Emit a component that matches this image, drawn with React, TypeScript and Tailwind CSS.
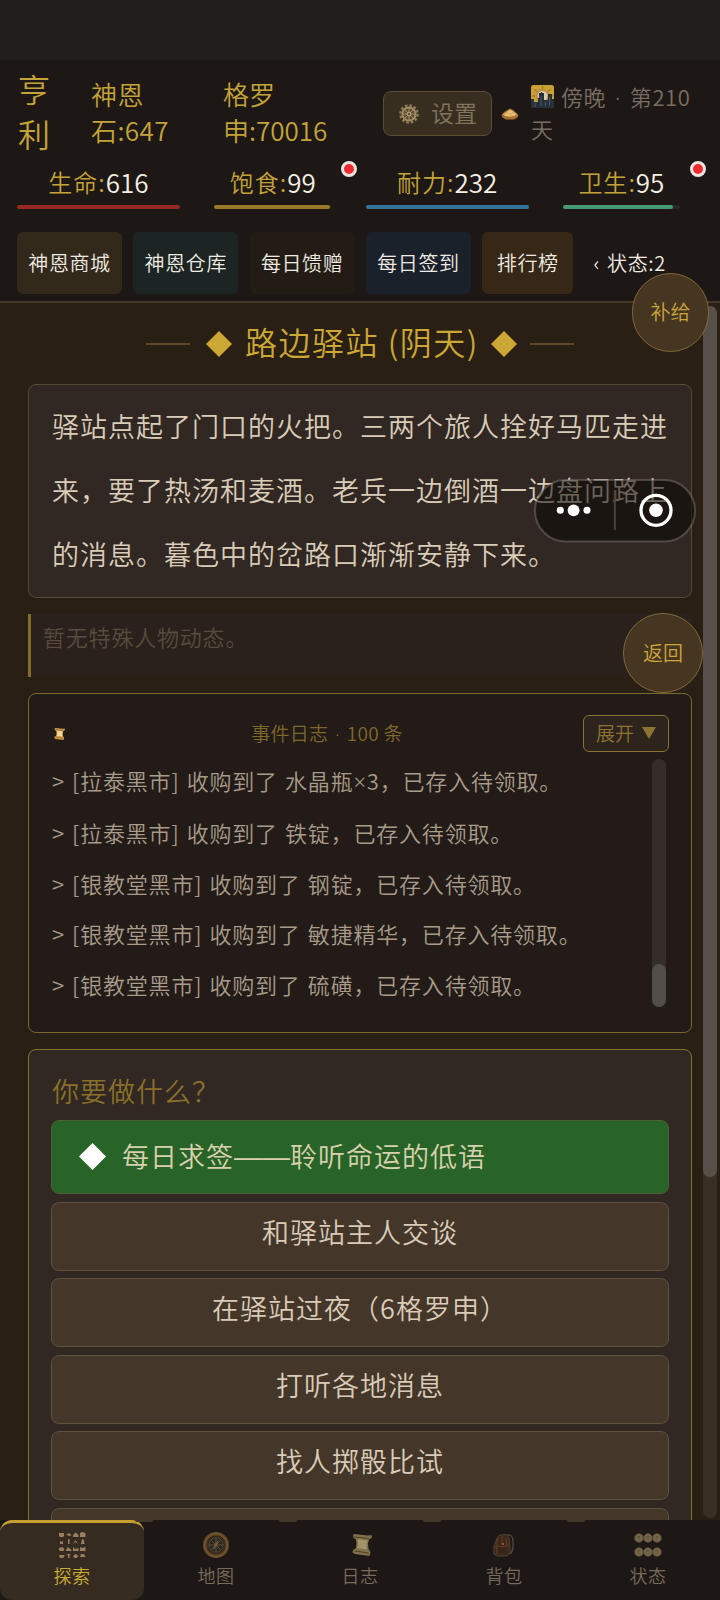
import { clsx } from "clsx";

const stats = [
    { label: "生命", value: 616, width: "w-[163px]", bar: "bg-[#962925]", fill: 100, alert: false },
    { label: "饱食", value: 99, width: "w-[117px]", bar: "bg-[#997929]", fill: 99, alert: true },
    { label: "耐力", value: 232, width: "w-[163px]", bar: "bg-[#36739a]", fill: 100, alert: false },
    { label: "卫生", value: 95, width: "w-[117px]", bar: "bg-[#459a74]", fill: 94, alert: true },
];

const shortcuts = [
    { label: "神恩商城", className: "w-[105px] bg-[#33291b]" },
    { label: "神恩仓库", className: "w-[105px] bg-[#1c2523]" },
    { label: "每日馈赠", className: "w-[105px] bg-[#221c14]" },
    { label: "每日签到", className: "w-[105px] bg-[#1b212b]" },
    { label: "排行榜", className: "w-[91px] bg-[#372717]" },
];

const logs = [
    "[拉泰黑市] 收购到了 水晶瓶×3，已存入待领取。",
    "[拉泰黑市] 收购到了 铁锭，已存入待领取。",
    "[银教堂黑市] 收购到了 钢锭，已存入待领取。",
    "[银教堂黑市] 收购到了 敏捷精华，已存入待领取。",
    "[银教堂黑市] 收购到了 硫磺，已存入待领取。",
];

const choices = ["和驿站主人交谈", "在驿站过夜（6格罗申）", "打听各地消息", "找人掷骰比试", ""];

function GearIcon() {
    return (
        <svg width="20" height="20" viewBox="0 0 20 20" fill="none">
            <circle cx="10" cy="10" r="8.6" stroke="#8d7a55" strokeWidth="2.4" strokeDasharray="2.7 1.8" />
            <circle cx="10" cy="10" r="6.6" fill="#5d4c30" stroke="#a08c64" strokeWidth="2" />
            <path d="M10 4v12M4 10h12M5.8 5.8l8.4 8.4M14.2 5.8l-8.4 8.4" stroke="#a08c64" strokeWidth="1" />
            <circle cx="10" cy="10" r="2.4" fill="#b09a6c" />
            <circle cx="10" cy="10" r="1" fill="#3d321e" />
        </svg>
    );
}

function GoldPileIcon() {
    return (
        <svg width="18" height="12" viewBox="0 0 18 12">
            <path d="M.500 7L3 4l3.500-2L9 .500l3 1.500 3 2.500L17.500 7l-1 2.500L13 11.500H5L1.500 9.500z" fill="#a87032" />
            <path d="M2 6.500L6.500 3 9 1.500l3 1.500 4 3.500L14 8l-5 1-5-1z" fill="#dbad60" />
            <path d="M4.500 7h4M7 4h4M10.500 6.500h3" stroke="#f3d796" strokeWidth="1" />
        </svg>
    );
}

function DuskIcon() {
    return (
        <svg className="inline-block align-[-2px] mr-[7px]" width="23" height="23" viewBox="0 0 23 23">
            <rect width="23" height="23" rx="2.500" fill="#c8a035" />
            <path d="M11.500 1v3M3.500 4.500l2.500 2M19.500 4.500l-2.500 2M1 11h3M19 11h3" stroke="#a97622" strokeWidth="1.300" />
            <circle cx="11.500" cy="11" r="6.800" fill="#b98a45" />
            <circle cx="11.500" cy="11" r="5" fill="#d8ccac" />
            <path d="M0 14h3v3h4v-4h1V8h2V7h1v1h2v7h4V9h4v5h2v9H0z" fill="#26313c" />
            <path d="M4 18v4M10 11v10M14.500 17v4M18.500 12v8" stroke="#4b5861" strokeWidth="1" />
        </svg>
    );
}

function ScrollIcon({ className, bright }: { className: string; bright?: boolean }) {
    return (
        <svg className={className} viewBox="0 0 20 22">
            <path d="M1 1.500L2 0l14 1.500L19.500 1l.500 2.500-3 2-1 4 .500 5.500 2 3-1 4L3 20l-2.500-1.500L1 16l3-2 .500-5L4 5.500 1.500 4z" fill={bright ? "#cf9f4e" : "#80704a"} />
            <path d="M5.500 5l10 1.500-1 4 .500 5-10-1.500 1-4z" fill={bright ? "#f0d79a" : "#a3936c"} />
            <path d="M2 3l15 1.500M2.500 17l14 2" stroke={bright ? "#8d5c24" : "#51412a"} strokeWidth="1.200" />
        </svg>
    );
}

function ExploreIcon() {
    const shapes = [
        "M0 1h5v3l-1 1H1L0 4z", "M0 3l3-2 2.500 2L4 4z", "M0 5V3l2.500-2.500L5.500 3v2z", "M0 1l2-1 3.500 1v4H0z",
        "M1 5V2l2 1 1-2v4z", "M2 0h1.500v5H2z", "M0 5l2.500-4L5 5l-2.500-2z", "M2 0l2 1 .500 4H1z",
        "M0 2l3-1 2.500 2-1 2H1L0 4z", "M0 5V4l2-3 3.500 3v1z", "M0 1l2 2 3.500-1v3H0z", "M0 1l2 1 3.500-1v4H0z",
        "M0 2h5.500v1L4 5H1z", "M0 1h5L3.500 2v3H2V2z", "M0 3l2.500-2 3 2-2 2h-2z", "M1 1h3l1.500 3H0z",
    ];
    return (
        <svg width="28" height="28" viewBox="0 0 28 28" fill="#9a7e60">
            {shapes.map((d, i) => (
                <path key={i} d={d} transform={`translate(${1 + (i % 4) * 7} ${1 + Math.floor(i / 4) * 7})`} />
            ))}
        </svg>
    );
}

function CompassIcon() {
    return (
        <svg width="28" height="28" viewBox="0 0 28 28" fill="none">
            <circle cx="14" cy="14" r="13" fill="#66492a" />
            <circle cx="14" cy="14" r="11.500" stroke="#7a5b36" strokeWidth=".8" />
            <circle cx="14" cy="14" r="9" fill="#292620" stroke="#3c2b19" strokeWidth="1.500" />
            <circle cx="14" cy="14" r="7.200" stroke="#51452f" />
            <path d="M14 7v14M7 14h14M9.500 9.500l9 9M18.500 9.500l-9 9" stroke="#665840" strokeWidth=".9" />
            <path d="M17 8.500l-2.200 6L11 19l1.500-5.500z" fill="#6e5f43" />
        </svg>
    );
}

function BackpackIcon() {
    return (
        <svg width="28" height="28" viewBox="0 0 28 28" fill="none">
            <path d="M17 4c5-1 6 3 6 8s0 9-3 11" stroke="#51483e" strokeWidth="1.300" />
            <path d="M7 7l3-3 6-.500 3 3.500 1 8v7l-3 3H7l-3-2v-8z" fill="#3d2719" stroke="#4d443c" strokeWidth="1" />
            <path d="M8 7c-2 6-1 10-1 16M12 5v8M16 7l1 8M5 16l14-1" stroke="#5d3c25" strokeWidth="1.200" />
            <path d="M8 17h8v5H8z" fill="#38251a" />
            <circle cx="13" cy="13" r="1.100" fill="#927049" />
        </svg>
    );
}

function StatusIcon() {
    return (
        <svg width="28" height="28" viewBox="0 0 28 28">
            {[7, 21].map((cy) =>
                [5, 14, 23].map((cx) => (
                    <g key={`${cx}-${cy}`}>
                        <circle cx={cx} cy={cy} r="4.300" fill="#74664a" stroke="#5e5138" strokeWidth=".8" />
                        <path d={`M${cx} ${cy - 2}v3.500M${cx - 1.5} ${cy - 1}h2.500`} stroke="#5b4e34" strokeWidth=".9" />
                    </g>
                ))
            )}
        </svg>
    );
}

const tabs = [
    { label: "探索", icon: <ExploreIcon /> },
    { label: "地图", icon: <CompassIcon /> },
    { label: "日志", icon: <ScrollIcon className="w-5 h-[22px] ml-1" /> },
    { label: "背包", icon: <BackpackIcon /> },
    { label: "状态", icon: <StatusIcon /> },
];

function Diamond({ className }: { className: string }) {
    return (
        <svg className={className} viewBox="0 0 26 26" fill="currentColor">
            <path d="M13 0l13 13-13 13L0 13z" />
        </svg>
    );
}

function Latin({ children, className }: { children: string; className?: string }) {
    return <span className={clsx("font-['Noto_Sans',sans-serif]", className)}>{children}</span>;
}

function Header() {
    return (
        <header className="h-[243px] shrink-0 bg-[#1d1815] border-b-2 border-[#463826]">
            {/* Character and currencies */}
            <div className="h-[104px] pl-[18px] flex items-center text-[#c4a339]">
                <div className="w-[34px] -mt-[2px] text-[32px] leading-[45px]">亨利</div>
                <div className="ml-[39px] w-[90px] -mt-px text-[26px] leading-[36px] tracking-[0.4px] whitespace-pre">{"神恩\n石:647"}</div>
                <div className="ml-[42px] w-[120px] -mt-px text-[26px] leading-[36px] whitespace-pre">{"格罗\n申:70016"}</div>
                <button className="ml-[40px] mt-[3px] w-[109px] h-[45px] shrink-0 rounded-lg border border-[#5b4d35] bg-[#382e20] flex items-center pl-[15px] gap-3 text-[23px] text-[#82755f]">
                    <GearIcon />
                    <span className="whitespace-nowrap -mt-0.5">设置</span>
                </button>
                <div className="ml-[9px] mt-[3px]">
                    <GoldPileIcon />
                </div>
                <div className="ml-3 mt-px text-[22px] leading-[31px] tracking-[0.6px] text-[#796e63] whitespace-nowrap">
                    <DuskIcon />傍晚<Latin className="[word-spacing:2.5px]"> · </Latin>第210<br />天
                </div>
            </div>

            {/* Vital stats */}
            <div className="h-[46px] pl-[17px] flex gap-[34.3px]">
                {stats.map((stat) => (
                    <div key={stat.label} className={clsx("relative shrink-0", stat.width)}>
                        <div className="h-[41px] flex items-center justify-center whitespace-nowrap pb-[6px]">
                            <span className="text-[24px] tracking-[1px] text-[#c4a339]">{stat.label}:</span>
                            <span className="text-[26px] text-[#f6f0e3]">{stat.value}</span>
                        </div>
                        <div className="h-1 rounded-full bg-[#202c25]">
                            <div className={clsx("h-1 rounded-full", stat.bar)} style={{ width: `${stat.fill}%` }} />
                        </div>
                        {stat.alert && (
                            <span className="absolute -right-[26px] -top-[3px] w-4 h-4 rounded-full border-[3px] border-[#ece4e0] bg-[#ee2b30]" />
                        )}
                    </div>
                ))}
            </div>

            {/* Shortcuts */}
            <div className="mt-[22px] pl-[17px] flex gap-[11.3px] items-center text-[20px] tracking-[0.6px] text-[#f0ebe2]">
                {shortcuts.map((item) => (
                    <button key={item.label} className={clsx("h-[62px] rounded-md whitespace-nowrap", item.className)}>
                        {item.label}
                    </button>
                ))}
                <span className="ml-[9px] whitespace-nowrap [word-spacing:2px]">‹ 状态:2</span>
            </div>
        </header>
    );
}

function EventLog() {
    return (
        <section className="mt-4 h-[340px] rounded-lg border border-[#7c672e] bg-[#221b17] pl-[23px] pr-[22px] pt-[21px]">
            <div className="h-[37px] flex items-center text-[19px] text-[#80682b]">
                <ScrollIcon className="w-[11px] h-3 ml-0.5" bright />
                <span className="flex-1 pl-1.5 text-center tracking-[0.300px]">
                    事件日志<Latin className="[word-spacing:1.5px]"> · </Latin>100 条
                </span>
                <button className="w-[86px] h-[37px] rounded-md border border-[#8a7234] bg-[#2d241d] pb-px flex items-center justify-center gap-2 text-[#8d7331]">
                    展开
                    <svg width="14" height="12" viewBox="0 0 14 12" fill="currentColor">
                        <path d="M0 0h14L7 12z" />
                    </svg>
                </button>
            </div>
            <div className="mt-[3px] flex justify-between pr-[3px]">
                <ul className="text-[22px] leading-[50.8px] tracking-[0.800px] [word-spacing:1.5px] text-[#a99c8a] whitespace-nowrap">
                    {logs.map((line) => (
                        <li key={line}>
                            &gt; {line.split("×")[0]}
                            {line.includes("×") && <Latin>×</Latin>}
                            {line.split("×")[1]}
                        </li>
                    ))}
                </ul>
                <div className="mt-[4px] h-[248px] w-[14px] rounded-full bg-[#352d29] flex flex-col justify-end">
                    <div className="h-[43px] rounded-full bg-[#524d48]" />
                </div>
            </div>
        </section>
    );
}

function Choices() {
    return (
        <section className="mt-4 h-[620px] rounded-lg border border-[#85722e] bg-[#312823] px-[22px] pt-5">
            <h2 className="pl-px h-[42px] leading-[42px] text-[27px] tracking-[1px] text-[#8a7029]">你要做什么？</h2>
            <button className="mt-2 w-full h-[74px] rounded-lg border border-[#515e34] bg-[#286428] pb-px flex items-center pl-[27px] text-[27px] tracking-[1px] text-[#d9d1ae]">
                <Diamond className="w-[27px] h-[27px] mr-4 text-white" />
                <span>
                    每日求签
                    <span className="relative -top-px font-['Liberation_Sans',sans-serif] text-[28px] tracking-normal leading-none">——</span>
                    聆听命运的低语
                </span>
            </button>
            <div className="mt-[7.500px] flex flex-col gap-[7.500px]">
                {choices.map((choice, i) => (
                    <button
                        key={i}
                        className="h-[69px] shrink-0 rounded-lg border border-[#5f513c] bg-[#44372a] pb-2 text-[27px] tracking-[1px] text-[#dacbb8]"
                    >
                        {choice}
                    </button>
                ))}
            </div>
        </section>
    );
}

function MiniProgramCapsule() {
    return (
        <svg className="absolute left-[533px] top-[478px]" width="164" height="65" viewBox="0 0 164 65">
            <rect x="2" y="2" width="160" height="61.500" rx="30.700" fill="#080504" fillOpacity=".53" stroke="#8c847e" strokeOpacity=".42" strokeWidth="2" />
            <path d="M81.800 12v40" stroke="#4b4541" strokeWidth="2" />
            <g fill="#fff">
                <circle cx="27.300" cy="32.300" r="3.500" />
                <circle cx="40.600" cy="32.300" r="5.900" />
                <circle cx="54" cy="32.300" r="3.500" />
                <circle cx="123" cy="32.300" r="6.800" />
            </g>
            <circle cx="123" cy="32.300" r="15" fill="none" stroke="#fff" strokeWidth="3.300" />
        </svg>
    );
}

export default function App() {
    return (
        <div
            lang="zh-CN"
            className="relative w-[720px] h-[1600px] overflow-hidden flex flex-col bg-[#2a1f14] font-['Noto_Sans_CJK_SC',sans-serif] font-[350]"
        >
            <div className="h-[60px] shrink-0 bg-[#221e1b]" />
            <Header />

            <div className="flex-1 min-h-0 flex overflow-hidden">
                <main className="w-[664px] ml-[28px] shrink-0">
                    <h1 className="h-[81px] flex items-center justify-center text-[32px] tracking-[1.500px] text-[#cba734] whitespace-nowrap">
                        <span className="w-11 h-0.5 bg-[#5d4928] mr-4" />
                        <Diamond className="w-[26px] h-[26px] mr-[13px]" />
                        <span className="-mt-[5px]">路边驿站 (阴天)</span>
                        <Diamond className="w-[26px] h-[26px] ml-[12px]" />
                        <span className="w-11 h-0.5 bg-[#5d4928] ml-[13px]" />
                    </h1>
                    <p className="h-[214px] rounded-lg border border-[#544937] bg-[#312823] px-[23px] py-[9px] text-[27px] leading-[64px] tracking-[1px] text-[#d9ccb8] whitespace-pre">
                        {"驿站点起了门口的火把。三两个旅人拴好马匹走进\n来，要了热汤和麦酒。老兵一边倒酒一边盘问路上\n的消息。暮色中的岔路口渐渐安静下来。"}
                    </p>
                    <div className="mt-4 h-[63px] border-l-[3px] border-[#856b2b] bg-[#2a211c] pl-3 pt-[3px] text-[22px] leading-[38px] tracking-[0.800px] text-[#574c3d]">
                        暂无特殊人物动态。
                    </div>
                    <EventLog />
                    <Choices />
                </main>
                <div className="ml-[11px] w-[14px] mt-[3px] mb-[2px] rounded-full bg-[#3a2f25]">
                    <div className="h-[871px] rounded-full bg-[#565049]" />
                </div>
            </div>

            <nav className="h-20 shrink-0 flex bg-[#1d1815]">
                {tabs.map((tab, i) => (
                    <button
                        key={tab.label}
                        className={clsx(
                            "relative w-36 pt-2 flex flex-col items-center text-[18px] leading-[34px] tracking-[0.500px]",
                            i === 0
                                ? "rounded-xl border-t-[3px] border-[#c5a031] bg-[#352b20] text-[#cdab35]"
                                : "border-t-[3px] border-transparent text-[#776b5b]"
                        )}
                    >
                        <span className="h-7 flex items-center">{tab.icon}</span>
                        <span className="h-[34px] -mt-px">{tab.label}</span>
                        {i > 0 && <span className="absolute -left-[9px] -top-[3px] w-[18px] h-0.5 rounded-b-full bg-[#44382b]" />}
                    </button>
                ))}
            </nav>

            {/* Floating controls */}
            <MiniProgramCapsule />
            <button className="absolute left-[632px] top-[273px] w-[77px] h-[79px] rounded-full border border-[#80693a] bg-[#463521] pb-px text-[20px] text-[#cba63b]">
                补给
            </button>
            <button className="absolute left-[623px] top-[613px] w-[80px] h-[80px] rounded-full border border-[#80693a] bg-[#463521] pb-px text-[20px] text-[#cba63b]">
                返回
            </button>
        </div>
    );
}
